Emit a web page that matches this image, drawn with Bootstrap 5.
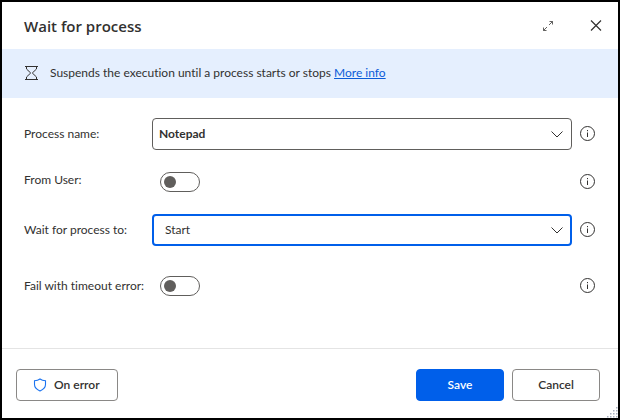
<!DOCTYPE html>
<html lang="en">
<head>
<meta charset="utf-8">
<meta name="viewport" content="width=device-width, initial-scale=1">
<title>Wait for process</title>
<link href="https://cdn.jsdelivr.net/npm/bootstrap@5.3.0/dist/css/bootstrap.min.css" rel="stylesheet">
<style>
body { font-family: "Segoe UI", Lato, "Open Sans", sans-serif; font-size: 12px; line-height: 16px; color: #323130; font-variant-ligatures: none; }
.dialog { border: 2px solid #000; background: #fff; }
.dialog-head { height: 47px; padding: 0 14px 0 22px; }
.dialog-head h1 { font-family: "Open Sans", sans-serif; font-size: 15px; line-height: 24px; font-weight: 600; }
.icon-btn { width: 16px; height: 16px; line-height: 0; color: #323130; }
.banner { padding: 16px 22px 17px; gap: 10px; background: #e5effe; }
.banner a { color: #0b5cd8; }
.fields { padding: 20px 22px; gap: 22px; }
.field { display: grid; grid-template-columns: 120px 1fr 16px; column-gap: 8px; align-items: center; }
.field label { white-space: nowrap; }
.field .control { line-height: 0; }
.field .form-select {
  height: 32px; padding: 0 32px 0 6px; border: 1px solid #605e5c; border-radius: 4px;
  font-size: 12px; line-height: 16px; color: #323130;
  background-image: url("data:image/svg+xml,%3csvg xmlns='http://www.w3.org/2000/svg' viewBox='0 0 12 7'%3e%3cpath fill='none' stroke='%23323130' d='M.5.5 6 6 11.5.5'/%3e%3c/svg%3e");
  background-size: 12px 7px; background-position: right 8px center;
}
.field .form-select.chosen { padding-left: 11px; border: 2px solid #005fea; background-position: right 7px center; }
.field .form-select:focus { box-shadow: none; }
.field .form-check-input {
  width: 40px; height: 20px; margin: 0 0 0 8px; border: 1px solid #605e5c; border-radius: 10px; float: none;
  background: #fff url("data:image/svg+xml,%3csvg xmlns='http://www.w3.org/2000/svg' viewBox='0 0 12 12'%3e%3ccircle cx='6' cy='6' r='6' fill='%23605e5c'/%3e%3c/svg%3e") no-repeat 3px center / 12px 12px;
}
.dialog-foot { padding: 20px 18px 17px 14px; gap: 8px; border-top: 1px solid #e4e4e4; }
.dialog-foot .btn { height: 32px; padding: 0 16px; min-width: 88px; border: 1px solid #8a8886; border-radius: 4px; font-size: 12px; line-height: 16px; font-weight: 600; color: #323130; background: #fff; }
.dialog-foot .btn.save { color: #fff; background: #005fea; border-color: #005fea; }
.dialog-foot .btn.on-error { gap: 7px; padding-right: 17px; }
.grip { right: 0; bottom: 0; }
svg { flex: none; display: block; }
</style>
<script src="https://cdn.jsdelivr.net/npm/bootstrap@5.3.0/dist/js/bootstrap.bundle.min.js"></script>
</head>
<body>
<svg class="d-none" aria-hidden="true">
  <symbol id="info" viewBox="0 0 16 16">
    <circle cx="7.500" cy="7.500" r="7" fill="none" stroke="#323130"/>
    <path d="M7.500 6.500v4.500M7.500 4v1.200" stroke="#323130"/>
  </symbol>
</svg>
<main class="dialog d-flex flex-column min-vh-100 position-relative">
  <header class="dialog-head d-flex align-items-center">
    <h1 class="m-0 me-auto">Wait for process</h1>
    <button type="button" class="icon-btn btn p-0 border-0 me-4" aria-label="Expand">
      <svg width="16" height="16" viewBox="0 0 16 16" fill="none" stroke="#484644" stroke-opacity=".85"><path d="M9.500 3.500h3v3M12.500 3.500 9 7M7 9l-3.500 3.500M3.500 9.500v3h3"/></svg>
    </button>
    <button type="button" class="icon-btn btn p-0 border-0 ms-2" aria-label="Close">
      <svg width="16" height="16" viewBox="0 0 16 16" fill="none" stroke="#323130" stroke-width="1.2"><path d="m3 2.500 10 10M13 2.500 3 12.500"/></svg>
    </button>
  </header>
  <section class="banner d-flex align-items-center">
    <svg width="16" height="16" viewBox="0 0 16 16" fill="none" stroke="#323130"><path d="M1 1.500h13M1 14.500h13M2.500 1.500V4L6.700 8l-4.200 4v2.500M12.500 1.500V4L8.300 8l4.200 4v2.500"/></svg>
    <div>Suspends the execution until a process starts or stops <a href="#">More info</a></div>
  </section>
  <form class="fields d-flex flex-column">
    <div class="field">
      <label for="pname">Process name:</label>
      <div class="control"><select id="pname" class="form-select fw-bold"><option>Notepad</option></select></div>
      <svg width="16" height="16"><use href="#info"/></svg>
    </div>
    <div class="field">
      <label for="user" class="pb-1">From User:</label>
      <div class="control form-switch p-0"><input id="user" class="form-check-input" type="checkbox" role="switch"></div>
      <svg width="16" height="16"><use href="#info"/></svg>
    </div>
    <div class="field">
      <label for="waitfor">Wait for process to:</label>
      <div class="control"><select id="waitfor" class="form-select chosen"><option>Start</option></select></div>
      <svg width="16" height="16"><use href="#info"/></svg>
    </div>
    <div class="field mt-2">
      <label for="fail">Fail with timeout error:</label>
      <div class="control form-switch p-0"><input id="fail" class="form-check-input" type="checkbox" role="switch"></div>
      <svg width="16" height="16"><use href="#info"/></svg>
    </div>
  </form>
  <footer class="dialog-foot d-flex mt-auto">
    <button type="button" class="btn on-error d-flex align-items-center me-auto">
      <svg width="14" height="14" viewBox="0 0 14 14" fill="none" stroke="#1a73f0" stroke-width="1.1"><path d="M7 1Q4.800 2.700 1.500 2.700V6.500Q1.500 10.500 7 13Q12.500 10.500 12.500 6.500V2.700Q9.200 2.700 7 1Z"/></svg>
      On error
    </button>
    <button type="button" class="btn save">Save</button>
    <button type="button" class="btn">Cancel</button>
  </footer>
  <svg class="grip position-absolute" width="11" height="11" viewBox="0 0 11 11" fill="#a9b0c0"><path d="M9 0h1.500v1.500H9zM9 3h1.500v1.500H9zM6 3h1.500v1.500H6zM9 6h1.500v1.500H9zM6 6h1.500v1.500H6zM3 6h1.500v1.500H3zM9 9h1.500v1.500H9zM6 9h1.500v1.500H6zM3 9h1.500v1.500H3zM0 9h1.500v1.500H0z"/></svg>
</main>
</body>
</html>
